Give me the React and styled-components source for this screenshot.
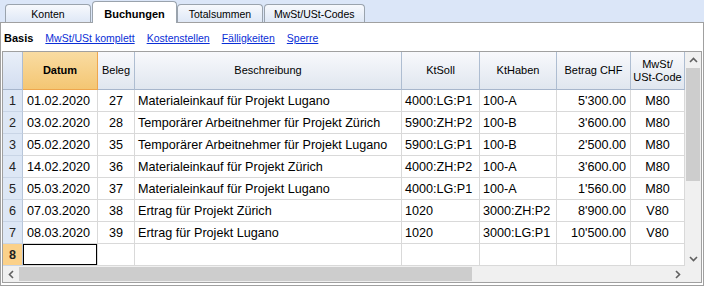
import React from "react";
import styled, { createGlobalStyle } from "styled-components";

const GlobalStyle = createGlobalStyle`
  html, body { margin: 0; padding: 0; background: #ffffff; }
  body { font-family: "Liberation Sans", Arial, sans-serif; width: 704px; height: 286px; overflow: hidden; }
  * { box-sizing: border-box; }
`;

const COLS = "20px 75px 37px 267px 78px 77px 74px 54px";

const Page = styled.div`
  width: 704px;
  height: 286px;
  display: flex;
  flex-direction: column;
`;

const TabStrip = styled.div`
  height: 23px;
  background: #dbe6f8;
  box-shadow: inset 0 -1px 0 #a0a0a0;
  display: flex;
  align-items: flex-end;
  gap: 1px;
  padding-left: 5px;
`;

const Tab = styled.div`
  min-width: ${(p) => (p.$active ? 85 : 86)}px;
  height: ${(p) => (p.$active ? 22 : 19)}px;
  margin-right: ${(p) => (p.$active ? -1 : 0)}px;
  padding: ${(p) => (p.$active ? "2px 9px 0" : "0 9px")};
  border: 1px solid #9aa3ad;
  border-bottom: ${(p) => (p.$active ? "none" : "1px solid #a0a0a0")};
  border-radius: 4px 4px 0 0;
  background: ${(p) =>
    p.$active ? "#ffffff" : "linear-gradient(#f7f9fd, #dfe8f6)"};
  display: flex;
  align-items: center;
  justify-content: center;
  font-size: ${(p) => (p.$active ? 11 : 10.5)}px;
  font-weight: ${(p) => (p.$active ? 700 : 400)};
  color: #000;
  white-space: nowrap;
`;

const Panel = styled.div`
  flex: 1;
  border: 1px solid #a0a0a0;
  border-top: none;
  padding: 0 1px 2px 1px;
  display: flex;
  flex-direction: column;
`;

const LinkBar = styled.div`
  height: 28px;
  display: flex;
  align-items: center;
  gap: 12px;
  padding-left: 2px;
  padding-top: 2px;
  font-size: 10.5px;
`;

const ViewLabel = styled.span`
  font-weight: 700;
  font-size: 11px;
  color: #000;
`;

const ViewLink = styled.a`
  color: #0a2ed6;
  text-decoration: underline;
  cursor: pointer;
`;

const GridFrame = styled.div`
  flex: 1;
  border: 1px solid #a0a0a0;
  display: grid;
  grid-template-columns: 1fr 16px;
  grid-template-rows: 1fr 16px;
  overflow: hidden;
`;

const Table = styled.div`
  display: flex;
  flex-direction: column;
  overflow: hidden;
`;

const Row = styled.div`
  display: grid;
  grid-template-columns: ${COLS};
  height: ${(p) => (p.$header ? 38 : 22)}px;
  flex-shrink: 0;
`;

const HeadCell = styled.div`
  display: flex;
  align-items: center;
  justify-content: center;
  text-align: center;
  font-size: 11px;
  line-height: 13px;
  font-weight: ${(p) => (p.$active ? 700 : 400)};
  color: #000;
  background: ${(p) =>
    p.$active
      ? "linear-gradient(#f9dca2, #f4c673)"
      : p.$corner
      ? "linear-gradient(#e9eff9, #d3def0)"
      : "linear-gradient(#f8f9fc, #e0e6ef)"};
  border-right: 1px solid ${(p) => (p.$active ? "#eea64e" : "#aebdd1")};
  border-bottom: 1px solid ${(p) => (p.$active ? "#eea64e" : "#a7b6cc")};
`;

const NumCell = styled.div`
  display: flex;
  align-items: center;
  justify-content: center;
  font-size: 12.6px;
  font-weight: ${(p) => (p.$current ? 700 : 400)};
  color: #222;
  background: ${(p) => (p.$current ? "#fbd18a" : "#dde7f5")};
  border-right: 1px solid #b8c6d9;
  border-bottom: 1px solid #c9d5e6;
`;

const Cell = styled.div`
  display: flex;
  align-items: center;
  justify-content: ${(p) =>
    p.$align === "right" ? "flex-end" : p.$align === "center" ? "center" : "flex-start"};
  padding: 0 ${(p) => (p.$align === "right" ? 4 : 3)}px 0 ${(p) => p.$pl || 3}px;
  font-size: 12.6px;
  color: #000;
  white-space: nowrap;
  overflow: hidden;
  background: #fff;
  border-right: 1px solid #d9d9d9;
  border-bottom: 1px solid #d9d9d9;
  box-shadow: ${(p) => (p.$selected ? "inset 0 0 0 1px #000" : "none")};
`;

const VScroll = styled.div`
  background: #f0f0f0;
  display: flex;
  flex-direction: column;
`;

const HScroll = styled.div`
  background: #f0f0f0;
  display: flex;
`;

const Corner = styled.div`
  background: #f0f0f0;
`;

const ArrowBtn = styled.div`
  width: 16px;
  height: 16px;
  flex-shrink: 0;
  display: flex;
  align-items: center;
  justify-content: center;
`;

const Thumb = styled.div`
  background: #cdcdcd;
  flex-shrink: 0;
  ${(p) => (p.$vertical ? `height: ${p.$size}px; margin: 0 1px;` : `width: ${p.$size}px; margin: 1px 0;`)}
`;

const Track = styled.div`
  flex: 1;
`;

const Chevron = ({ dir }) => {
  const pts = {
    up: "1,6 4.5,2.5 8,6",
    down: "1,3 4.5,6.5 8,3",
    left: "6,1 2.5,4.5 6,8",
    right: "3,1 6.5,4.5 3,8",
  }[dir];
  return (
    <svg width="9" height="9" viewBox="0 0 9 9">
      <polyline points={pts} fill="none" stroke="#606060" strokeWidth="1.6" />
    </svg>
  );
};

const rows = [
  ["01.02.2020", "27", "Materialeinkauf für Projekt Lugano", "4000:LG:P1", "100-A", "5'300.00", "M80"],
  ["03.02.2020", "28", "Temporärer Arbeitnehmer für Projekt Zürich", "5900:ZH:P2", "100-B", "3'600.00", "M80"],
  ["05.02.2020", "35", "Temporärer Arbeitnehmer für Projekt Lugano", "5900:LG:P1", "100-B", "2'500.00", "M80"],
  ["14.02.2020", "36", "Materialeinkauf für Projekt Zürich", "4000:ZH:P2", "100-A", "3'600.00", "M80"],
  ["05.03.2020", "37", "Materialeinkauf für Projekt Lugano", "4000:LG:P1", "100-A", "1'560.00", "M80"],
  ["07.03.2020", "38", "Ertrag für Projekt Zürich", "1020", "3000:ZH:P2", "8'900.00", "V80"],
  ["08.03.2020", "39", "Ertrag für Projekt Lugano", "1020", "3000:LG:P1", "10'500.00", "V80"],
];

const aligns = ["left", "center", "left", "left", "left", "right", "center"];

export default function App() {
  return (
    <Page>
      <GlobalStyle />
      <TabStrip>
        <Tab>Konten</Tab>
        <Tab $active>Buchungen</Tab>
        <Tab>Totalsummen</Tab>
        <Tab>MwSt/USt-Codes</Tab>
      </TabStrip>
      <Panel>
        <LinkBar>
          <ViewLabel>Basis</ViewLabel>
          <ViewLink>MwSt/USt komplett</ViewLink>
          <ViewLink>Kostenstellen</ViewLink>
          <ViewLink>Fälligkeiten</ViewLink>
          <ViewLink>Sperre</ViewLink>
        </LinkBar>
        <GridFrame>
          <Table>
            <Row $header>
              <HeadCell $corner />
              <HeadCell $active>Datum</HeadCell>
              <HeadCell>Beleg</HeadCell>
              <HeadCell>Beschreibung</HeadCell>
              <HeadCell>KtSoll</HeadCell>
              <HeadCell>KtHaben</HeadCell>
              <HeadCell>Betrag CHF</HeadCell>
              <HeadCell>
                MwSt/
                <br />
                USt-Code
              </HeadCell>
            </Row>
            {rows.map((r, i) => (
              <Row key={i}>
                <NumCell>{i + 1}</NumCell>
                {r.map((v, j) => (
                  <Cell key={j} $align={aligns[j]} $pl={j === 0 ? 4 : 3}>
                    {v}
                  </Cell>
                ))}
              </Row>
            ))}
            <Row>
              <NumCell $current>8</NumCell>
              <Cell $selected />
              {aligns.slice(1).map((a, j) => (
                <Cell key={j} $align={a} />
              ))}
            </Row>
          </Table>
          <VScroll>
            <ArrowBtn>
              <Chevron dir="up" />
            </ArrowBtn>
            <Thumb $vertical $size={113} />
            <Track />
            <ArrowBtn>
              <Chevron dir="down" />
            </ArrowBtn>
          </VScroll>
          <HScroll>
            <ArrowBtn>
              <Chevron dir="left" />
            </ArrowBtn>
            <Thumb $size={453} />
            <Track />
            <ArrowBtn>
              <Chevron dir="right" />
            </ArrowBtn>
          </HScroll>
          <Corner />
        </GridFrame>
      </Panel>
    </Page>
  );
}
